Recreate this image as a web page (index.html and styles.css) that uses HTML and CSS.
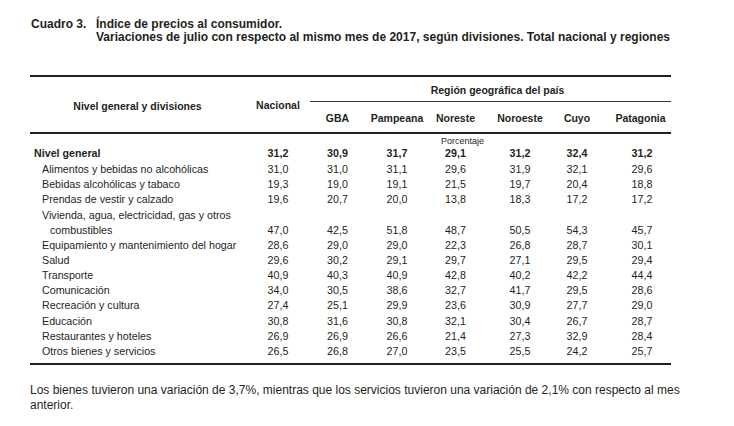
FILE: index.html
```html
<!DOCTYPE html>
<html lang="es">
<head>
<meta charset="utf-8">
<title>Cuadro 3. Índice de precios al consumidor</title>
<link rel="stylesheet" href="styles.css">
</head>
<body>
<div class="page">
  <div class="caption">
    <div class="caption-num">Cuadro 3.</div>
    <div class="caption-text">
      <div>Índice de precios al consumidor.</div>
      <div>Variaciones de julio con respecto al mismo mes de 2017, según divisiones. Total nacional y regiones</div>
    </div>
  </div>

  <div class="table">
    <div class="rule thick"></div>
    <div class="head">
      <div class="h-label">Nivel general y divisiones</div>
      <div class="h-nacional">Nacional</div>
      <div class="h-region">Región geográfica del país</div>
      <div class="h-region-rule"></div>
      <div class="h-col c3">GBA</div>
      <div class="h-col c4">Pampeana</div>
      <div class="h-col c5">Noreste</div>
      <div class="h-col c6">Noroeste</div>
      <div class="h-col c7">Cuyo</div>
      <div class="h-col c8 pat">Patagonia</div>
    </div>
    <div class="rule thick"></div>

    <div class="row unit-row"><div class="unit">Porcentaje</div></div>

    <div class="row total">
      <div class="label">Nivel general</div>
      <div class="num">31,2</div><div class="num">30,9</div><div class="num">31,7</div><div class="num">29,1</div><div class="num">31,2</div><div class="num">32,4</div><div class="num pat">31,2</div>
    </div>
    <div class="row">
      <div class="label">Alimentos y bebidas no alcohólicas</div>
      <div class="num">31,0</div><div class="num">31,0</div><div class="num">31,1</div><div class="num">29,6</div><div class="num">31,9</div><div class="num">32,1</div><div class="num pat">29,6</div>
    </div>
    <div class="row">
      <div class="label">Bebidas alcohólicas y tabaco</div>
      <div class="num">19,3</div><div class="num">19,0</div><div class="num">19,1</div><div class="num">21,5</div><div class="num">19,7</div><div class="num">20,4</div><div class="num pat">18,8</div>
    </div>
    <div class="row">
      <div class="label">Prendas de vestir y calzado</div>
      <div class="num">19,6</div><div class="num">20,7</div><div class="num">20,0</div><div class="num">13,8</div><div class="num">18,3</div><div class="num">17,2</div><div class="num pat">17,2</div>
    </div>
    <div class="row">
      <div class="label">Vivienda, agua, electricidad, gas y otros</div>
    </div>
    <div class="row">
      <div class="label indent">combustibles</div>
      <div class="num">47,0</div><div class="num">42,5</div><div class="num">51,8</div><div class="num">48,7</div><div class="num">50,5</div><div class="num">54,3</div><div class="num pat">45,7</div>
    </div>
    <div class="row">
      <div class="label">Equipamiento y mantenimiento del hogar</div>
      <div class="num">28,6</div><div class="num">29,0</div><div class="num">29,0</div><div class="num">22,3</div><div class="num">26,8</div><div class="num">28,7</div><div class="num pat">30,1</div>
    </div>
    <div class="row">
      <div class="label">Salud</div>
      <div class="num">29,6</div><div class="num">30,2</div><div class="num">29,1</div><div class="num">29,7</div><div class="num">27,1</div><div class="num">29,5</div><div class="num pat">29,4</div>
    </div>
    <div class="row">
      <div class="label">Transporte</div>
      <div class="num">40,9</div><div class="num">40,3</div><div class="num">40,9</div><div class="num">42,8</div><div class="num">40,2</div><div class="num">42,2</div><div class="num pat">44,4</div>
    </div>
    <div class="row">
      <div class="label">Comunicación</div>
      <div class="num">34,0</div><div class="num">30,5</div><div class="num">38,6</div><div class="num">32,7</div><div class="num">41,7</div><div class="num">29,5</div><div class="num pat">28,6</div>
    </div>
    <div class="row">
      <div class="label">Recreación y cultura</div>
      <div class="num">27,4</div><div class="num">25,1</div><div class="num">29,9</div><div class="num">23,6</div><div class="num">30,9</div><div class="num">27,7</div><div class="num pat">29,0</div>
    </div>
    <div class="row">
      <div class="label">Educación</div>
      <div class="num">30,8</div><div class="num">31,6</div><div class="num">30,8</div><div class="num">32,1</div><div class="num">30,4</div><div class="num">26,7</div><div class="num pat">28,7</div>
    </div>
    <div class="row">
      <div class="label">Restaurantes y hoteles</div>
      <div class="num">26,9</div><div class="num">26,9</div><div class="num">26,6</div><div class="num">21,4</div><div class="num">27,3</div><div class="num">32,9</div><div class="num pat">28,4</div>
    </div>
    <div class="row">
      <div class="label">Otros bienes y servicios</div>
      <div class="num">26,5</div><div class="num">26,8</div><div class="num">27,0</div><div class="num">23,5</div><div class="num">25,5</div><div class="num">24,2</div><div class="num pat">25,7</div>
    </div>
    <div class="rule thick bottom"></div>
  </div>

  <p class="note">Los bienes tuvieron una variación de 3,7%, mientras que los servicios tuvieron una variación de 2,1% con respecto al mes anterior.</p>
</div>
</body>
</html>
```

FILE: styles.css
```css
* {
  box-sizing: border-box;
}

html, body {
  margin: 0;
  padding: 0;
  background: #ffffff;
}

body {
  font-family: "Liberation Sans", Arial, sans-serif;
  color: #231f20;
}

.page {
  width: 734px;
  height: 426px;
  overflow: hidden;
  padding-top: 17.5px;
}

.caption {
  display: flex;
  margin-left: 31px;
  font-size: 12px;
  font-weight: bold;
  line-height: 13px;
}

.caption-num {
  width: 65px;
  flex: none;
}

.table {
  --cols: 216px 64px 55px 64px 53px 76px 38px 75px;
  margin-left: 30px;
  margin-top: 31.5px;
  width: 641px;
  font-size: 10.7px;
}

.rule {
  height: 1px;
  background: #231f20;
}

.rule.thick {
  height: 2px;
}

.rule.bottom {
  margin-top: 4px;
}

.head {
  display: grid;
  grid-template-columns: var(--cols);
  grid-template-rows: 24px 1px 30px;
  font-weight: bold;
  font-size: 10.5px;
}

.h-label {
  grid-column: 1;
  grid-row: 1 / 4;
  display: flex;
  align-items: center;
  justify-content: center;
  padding-right: 1px;
  padding-top: 3px;
}

.h-nacional {
  grid-column: 2;
  grid-row: 1 / 4;
  display: flex;
  align-items: center;
  justify-content: center;
  padding-top: 1px;
}

.h-region {
  grid-column: 3 / 9;
  grid-row: 1;
  display: flex;
  align-items: center;
  justify-content: center;
  padding-top: 2px;
  padding-left: 14px;
}

.h-region-rule {
  grid-column: 3 / 9;
  grid-row: 2;
  background: #3a3a3a;
}

.h-col {
  grid-row: 3;
  display: flex;
  align-items: center;
  justify-content: center;
  padding-top: 2px;
}

.c3 { grid-column: 3; }
.c4 { grid-column: 4; }
.c5 { grid-column: 5; }
.c6 { grid-column: 6; }
.c7 { grid-column: 7; }
.c8 { grid-column: 8; }

.h-col.pat {
  padding-left: 14px;
}

.row {
  display: grid;
  grid-template-columns: var(--cols);
  height: 15.17px;
  line-height: 15px;
  align-items: center;
}

.unit-row {
  height: 12px;
  line-height: 12px;
}

.unit {
  grid-column: 5;
  font-size: 9px;
  padding-left: 12px;
  white-space: nowrap;
  padding-top: 1px;
}

.row.total {
  height: 16px;
  line-height: 14px;
  align-items: start;
  font-weight: bold;
}

.label {
  grid-column: 1;
  padding-left: 12px;
  white-space: nowrap;
}

.row.total .label {
  padding-left: 4px;
}

.label.indent {
  padding-left: 20px;
}

.num {
  text-align: center;
}

.num.pat {
  padding-left: 17px;
}

.note {
  margin: 18px 0 0 30px;
  width: 660px;
  font-size: 12px;
  line-height: 15px;
}
```
